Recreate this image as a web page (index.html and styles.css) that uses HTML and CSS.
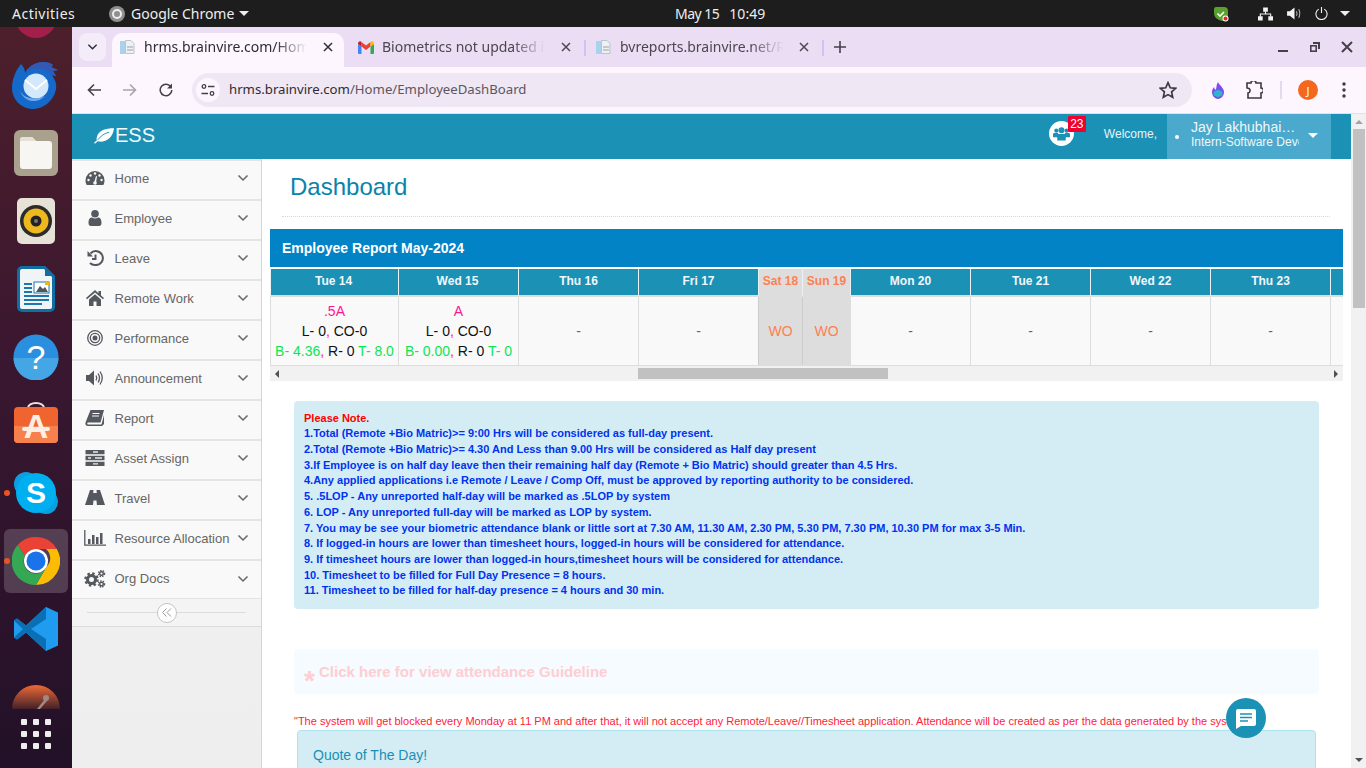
FILE: index.html
```html
<!DOCTYPE html>
<html lang="en">
<head>
    <meta charset="UTF-8">
    <meta name="viewport" content="width=device-width, initial-scale=1.0">
    <title>ESS - Dashboard</title>
    <link rel="stylesheet" href="styles.css">
</head>
<body>
    <svg class="sprite" xmlns="http://www.w3.org/2000/svg">
        <symbol id="chev" viewBox="0 0 12 8"><path d="M1.500 1.500 6 6l4.500-4.500" fill="none" stroke="currentColor" stroke-width="1.500"/></symbol>
        <symbol id="doc" viewBox="0 0 16 16">
            <path d="M1 2h5v13H1z" fill="#a9d3ea"/><path d="M6.500 1.500h5.500l3 3v10H6.500z" fill="#eef0f2" stroke="#b9c4cc"/><path d="M8 8h6M8 11h6" stroke="#b5bcc2" stroke-width="1.500"/>
        </symbol>
        <symbol id="close" viewBox="0 0 12 12"><path d="M2 2l8 8M10 2l-8 8" stroke="currentColor" stroke-width="1.500"/></symbol>
        <symbol id="gmail" viewBox="0 0 16 13">
            <path d="M0 3v9a1 1 0 0 0 1 1h2.500V5.500z" fill="#4285f4"/><path d="M16 3v9a1 1 0 0 1-1 1h-2.500V5.500z" fill="#34a853"/>
            <path d="M3.500 5.500 8 9l4.500-3.500V1L8 4.500 3.500 1z" fill="#ea4335"/><path d="M0 3c0-2.500 2-3.500 3.500-2v4.500z" fill="#c5221f"/><path d="M16 3c0-2.500-2-3.500-3.500-2v4.500z" fill="#fbbc04"/>
        </symbol>
    </svg>

    <header class="topbar">
        <div class="top-left">
            <span class="activities">Activities</span>
            <span class="app-menu">
                <svg class="app-dot" viewBox="0 0 16 16"><circle cx="8" cy="8" r="8" fill="#8f8f8f"/><circle cx="8" cy="8" r="4" fill="none" stroke="#eee" stroke-width="2"/></svg>
                Google Chrome
                <i class="caret"></i>
            </span>
        </div>
        <div class="clock"><span class="clock-date">May 15</span><span>10:49</span></div>
        <div class="tray">
            <svg class="tray-shield" viewBox="0 0 16 16">
                <path d="M1 3q0-2 2-2h8q4 0 4 4v4q0 5-6 6Q1 13 1 7z" fill="#5aa02c"/>
                <path d="M4.500 7.500 7 10l4-4" fill="none" stroke="#fff" stroke-width="1.600"/>
                <circle cx="12.500" cy="12.500" r="3" fill="#fff"/><circle cx="12.500" cy="12.500" r="2" fill="#e8232a"/>
            </svg>
            <svg class="tray-net" viewBox="0 0 16 14" fill="#f2f2f2">
                <path d="M5.500 0h5v4.500h-5zM0 9.500h5V14H0zM11 9.500h5V14h-5z"/>
                <path d="M8 4v3M2.500 10V7h11v3" fill="none" stroke="#f2f2f2" stroke-width="1.200"/>
            </svg>
            <svg class="tray-sound" viewBox="0 0 16 14">
                <path d="M0 4.500h3L8 .5v13l-5-4H0z" fill="#f2f2f2"/>
                <path d="M10 4.500q1.500 2.500 0 5M12.500 2.500q2.500 4.500 0 9" fill="none" stroke="#bbb" stroke-width="1.100"/>
            </svg>
            <svg class="tray-power" viewBox="0 0 14 14">
                <path d="M4 2.300a6 6 0 1 0 6 0M7 0v6.500" fill="none" stroke="#f2f2f2" stroke-width="1.200"/>
            </svg>
            <i class="caret"></i>
        </div>
    </header>

    <div class="desk">
        <aside class="dock">
            <div class="dock-item dock-first">
                <svg width="36" height="24" viewBox="0 0 36 24"><circle cx="18" cy="-10" r="21" fill="#a41e4c"/></svg>
            </div>
            <div class="dock-item">
                <svg width="50" height="48" viewBox="0 0 50 48">
                    <path d="M10 3c3 3 4 6 4 9 3-6 10-11 18-11 4 0 8 1 10 3l-2 2 7 3-5 1 3 5-4-1c3 5 5 9 4 14-2 11-12 20-23 20C10 48 1 38 1 27 1 18 5 9 10 3z" fill="#1569c9"/>
                    <path d="M14 12c3-6 10-11 18-11 4 0 8 1 10 3l-2 2 7 3-5 1 3 5-4-1c-5-6-17-10-27-2z" fill="#3359b5"/>
                    <circle cx="25" cy="25" r="12.500" fill="#d3e8fb"/>
                    <path d="M14 19l11 9 11-9" fill="none" stroke="#fff" stroke-width="2"/>
                    <path d="M9 30c4 7 14 10 25 5-6 7-20 8-25-5z" fill="#6aa8ee"/>
                </svg>
            </div>
            <div class="dock-item">
                <svg width="44" height="46" viewBox="0 0 44 46">
                    <rect width="44" height="46" rx="6" fill="#a9a18d"/>
                    <path d="M6 10a3 3 0 0 1 3-3h9l4 4h13a3 3 0 0 1 3 3v22a3 3 0 0 1-3 3H9a3 3 0 0 1-3-3z" fill="#f7f6f3"/>
                    <path d="M6 10a3 3 0 0 1 3-3h9l4 4H6z" fill="#e4e0d6"/>
                </svg>
            </div>
            <div class="dock-item">
                <svg width="38" height="46" viewBox="0 0 38 46">
                    <rect width="38" height="46" rx="5" fill="#e6e2d8"/>
                    <circle cx="19" cy="23" r="16" fill="#2b2b2b"/><circle cx="19" cy="23" r="12.500" fill="#eeb81f"/>
                    <circle cx="19" cy="23" r="5.500" fill="#222"/><circle cx="19" cy="23" r="2" fill="#777"/>
                </svg>
            </div>
            <div class="dock-item">
                <svg width="38" height="46" viewBox="0 0 38 46">
                    <path d="M5 0h23l10 10v31a5 5 0 0 1-5 5H5a5 5 0 0 1-5-5V5a5 5 0 0 1 5-5z" fill="#0f6ea3"/>
                    <path d="M3 5a2 2 0 0 1 2-2h22l8 8v30a2 2 0 0 1-2 2H5a2 2 0 0 1-2-2z" fill="#f1f4f6"/>
                    <path d="M28 0l10 10H28z" fill="#0f6ea3"/>
                    <path d="M7 17h8v2H7zM7 21h8v2H7zM7 25h8v2H7zM7 29h25v2H7zM7 33h25v2H7zM7 37h18v2H7z" fill="#1b78ad"/>
                    <rect x="17" y="16" width="15" height="11" fill="#fff" stroke="#1b78ad"/><path d="M19 26l4-6 3 3 2-2 3 5z" fill="#555"/><rect x="28" y="16" width="4" height="3" fill="#f0b71c"/>
                </svg>
            </div>
            <div class="dock-item">
                <svg width="46" height="46" viewBox="0 0 46 46">
                    <circle cx="23" cy="23" r="22.500" fill="#2a8fde"/><path d="M.5 24h45a22.500 22.500 0 0 1-45 0z" fill="#45a6e6"/>
                    <text x="23" y="35" class="dock-glyph dock-thin" font-size="34">?</text>
                </svg>
            </div>
            <div class="dock-item">
                <svg width="46" height="46" viewBox="0 0 46 46">
                    <path d="M15 10V6a8 5 0 0 1 16 0v4" fill="none" stroke="#f3e1d0" stroke-width="2"/>
                    <rect x="1" y="5" width="44" height="36" rx="4" fill="#f0652f"/><path d="M1 24h44v13a4 4 0 0 1-4 4H5a4 4 0 0 1-4-4z" fill="#f6814d"/>
                    <text x="23" y="36" class="dock-glyph dock-cream" font-size="34">A</text>
                    <rect x="9" y="25" width="28" height="4" rx="2" fill="#fdeee4"/>
                </svg>
            </div>
            <div class="dock-item">
                <i class="run-dot"></i>
                <svg width="46" height="44" viewBox="0 0 46 44">
                    <circle cx="13" cy="13" r="12" fill="#0a9fe0"/><circle cx="33" cy="31" r="12" fill="#0a9fe0"/>
                    <circle cx="23" cy="22" r="20" fill="#00aff0"/>
                    <text x="23" y="32" class="dock-glyph" font-size="30">S</text>
                </svg>
            </div>
            <div class="dock-item is-active">
                <i class="run-dot"></i>
                <svg width="48" height="48" viewBox="0 0 48 48">
                    <path d="M24 0a24 24 0 0 1 20.800 12H24a12 12 0 0 0-11 7L5.700 8A24 24 0 0 1 24 0z" fill="#ea4335"/>
                    <path d="M44.800 12A24 24 0 0 1 24 48l10.400-18a12 12 0 0 0-.4-18z" fill="#fbbc04"/>
                    <path d="M5.700 8A24 24 0 0 0 24 48l10.400-18A12 12 0 0 1 13 19z" fill="#34a853"/>
                    <circle cx="24" cy="24" r="12" fill="#fff"/><circle cx="24" cy="24" r="9.500" fill="#1a73e8"/>
                </svg>
            </div>
            <div class="dock-item">
                <svg width="44" height="44" viewBox="0 0 44 44">
                    <path d="M32 0l12 5.500v33L32 44 12 25.500 3 32.500 0 30.500V13.500L3 11.500l9 7z" fill="#1f9cf0"/>
                    <path d="M32 0 12 18.500 3 11.500 0 13.500 9 22 0 30.500l3 2 9-7L32 44V32L17 22 32 12z" fill="#0a6fb5"/>
                </svg>
            </div>
            <div class="dock-item dock-last">
                <svg width="48" height="24" viewBox="0 0 48 24">
                    <defs><linearGradient id="pm" x1="0" y1="0" x2="0" y2="1"><stop offset="0" stop-color="#ef6a36"/><stop offset="1" stop-color="#43202a"/></linearGradient></defs>
                    <path d="M0 24a24 24 0 0 1 48 0z" fill="url(#pm)"/>
                    <path d="M25 24l8-10 2 2-7 8z" fill="#a08a84"/><circle cx="34" cy="13" r="3" fill="#a08a84"/>
                </svg>
            </div>
            <div class="apps-grid"><i></i><i></i><i></i><i></i><i></i><i></i><i></i><i></i><i></i></div>
        </aside>

        <div class="window">
            <div class="tabstrip">
                <button class="tab-list"><svg width="11" height="8"><use href="#chev"/></svg></button>
                <div class="tab tab-active">
                    <svg class="favicon"><use href="#doc"/></svg>
                    <span class="tab-title">hrms.brainvire.com/Home/EmployeeDashBoard</span>
                    <svg class="tab-close"><use href="#close"/></svg>
                </div>
                <div class="tab tab-mail">
                    <svg class="favicon"><use href="#gmail"/></svg>
                    <span class="tab-title">Biometrics not updated issue</span>
                    <svg class="tab-close"><use href="#close"/></svg>
                </div>
                <div class="tab tab-reports">
                    <svg class="favicon"><use href="#doc"/></svg>
                    <span class="tab-title">bvreports.brainvire.net/Report</span>
                    <svg class="tab-close"><use href="#close"/></svg>
                </div>
                <svg class="tab-new" viewBox="0 0 12 12"><path d="M6 0v12M0 6h12" stroke="#45404a" stroke-width="1.600"/></svg>
                <div class="win-controls">
                    <svg viewBox="0 0 12 12"><path d="M1 10h10" stroke="#45404a" stroke-width="2"/></svg>
                    <svg viewBox="0 0 12 12"><path d="M4 1h7v7H9V3H4z" fill="#45404a"/><rect x="1.800" y="4.800" width="5.400" height="5.400" fill="none" stroke="#45404a" stroke-width="1.600"/></svg>
                    <svg viewBox="0 0 12 12"><path d="M1 1l10 10M11 1 1 11" stroke="#45404a" stroke-width="2"/></svg>
                </div>
            </div>

            <div class="toolbar">
                <span class="tool"><svg viewBox="0 0 14 14"><path d="M14 7H2M7 1.500 1.500 7 7 12.500" fill="none" stroke="#45404a" stroke-width="1.600"/></svg></span>
                <span class="tool"><svg viewBox="0 0 14 14"><path d="M0 7h12M7 1.500 12.500 7 7 12.500" fill="none" stroke="#a9a4ad" stroke-width="1.600"/></svg></span>
                <span class="tool"><svg viewBox="0 0 14 14"><path d="M12 4a5.800 5.800 0 1 0 .800 3" fill="none" stroke="#45404a" stroke-width="1.500"/><path d="M13 .5v5H8z" fill="#45404a"/></svg></span>
                <div class="omnibox">
                    <span class="site-info"><svg viewBox="0 0 14 12"><circle cx="3" cy="2.500" r="1.800" fill="none" stroke="#45404a" stroke-width="1.300"/><path d="M7 2.500h6.500M.5 9.500H7" stroke="#45404a" stroke-width="1.300"/><circle cx="11" cy="9.500" r="1.800" fill="none" stroke="#45404a" stroke-width="1.300"/></svg></span>
                    <span class="url">hrms.brainvire.com<span class="url-path">/Home/EmployeeDashBoard</span></span>
                    <svg class="star" viewBox="0 0 16 16"><path d="M8 1.500l2 4.500 4.800.5-3.600 3.200 1 4.800L8 12.100l-4.200 2.400 1-4.800L1.200 6.500 6 6z" fill="none" stroke="#3d3842" stroke-width="1.500"/></svg>
                </div>
                <span class="tool tool-first"><svg class="flame" viewBox="0 0 16 20">
                    <path d="M8 0c1 3 6 6 7 11 .5 5-3 9-7 9s-7.500-4-7-9c.3-2 1.500-4 2.500-5 0 2 1 3 2 3C6.500 6 6 3 8 0z" fill="#7a4df0"/>
                    <path d="M8 9l5 2.500v4L8 18l-5-2.500v-4z" fill="#2fb5c9"/>
                </svg></span>
                <span class="tool"><svg class="puzzle" viewBox="0 0 18 18"><path d="M2 2h4a2.500 2.500 0 0 1 5 0h5v5a2.500 2.500 0 0 1 0 5v5H3v-5a2.500 2.500 0 0 0 1-4.500L2 7z" fill="none" stroke="#3d3842" stroke-width="1.600"/></svg></span>
                <i class="tool-sep"></i>
                <span class="tool"><span class="avatar">J</span></span>
                <span class="tool"><svg class="kebab" viewBox="0 0 4 16" fill="#3d3842"><circle cx="2" cy="2" r="1.700"/><circle cx="2" cy="8" r="1.700"/><circle cx="2" cy="14" r="1.700"/></svg></span>
            </div>

            <div class="page">
                <div class="page-main">
                    <div class="app-header">
                        <div class="brand">
                            <svg class="leaf" viewBox="0 0 22 16"><path d="M21 0C12 0 5 2 3 9c-.4 1.500-.4 2.500 0 3.500L0 15l1 1 3-2.500C13 16 20 9 21 0z" fill="#fff"/><path d="M4 12C7 8 11 5 16 4" stroke="#1b91b6" stroke-width="1" fill="none"/></svg>
                            ESS
                        </div>
                        <div class="notify">
                            <svg viewBox="0 0 18 15" fill="#1b91b6">
                                <circle cx="3.500" cy="4.500" r="2.200"/><circle cx="14.500" cy="4.500" r="2.200"/><circle cx="9" cy="4" r="3.200"/>
                                <path d="M0 8.500q0-1.500 1.500-1.500h4v4.500H0zM12.500 7h4q1.500 0 1.500 1.500v3h-5.500z"/>
                                <path d="M4.500 9.500Q4.500 8 6 8h6q1.500 0 1.500 1.500V15h-9z"/>
                            </svg>
                            <span class="badge">23</span>
                        </div>
                        <span class="welcome">Welcome,</span>
                        <div class="user-box">
                            <i class="user-dot"></i>
                            <div class="user-text">
                                <div class="user-name">Jay Lakhubhai…</div>
                                <div class="user-role">Intern-Software Developer</div>
                            </div>
                            <i class="caret caret-user"></i>
                        </div>
                    </div>

                    <div class="app-body">
                        <nav class="sidebar">
                            <a class="nav-item">
                                <svg class="nav-icon" viewBox="0 0 20 16"><path d="M10 1A9.500 9.500 0 0 0 .5 10.500c0 1.800.5 3.500 1.300 4.500h16.400c.8-1 1.300-2.700 1.300-4.500A9.500 9.500 0 0 0 10 1z" fill="currentColor"/><g fill="#f9f9f9"><circle cx="3.500" cy="10" r="1.200"/><circle cx="5.500" cy="5.500" r="1.200"/><circle cx="10" cy="3.500" r="1.200"/><circle cx="14.500" cy="5.500" r="1.200"/><circle cx="16.500" cy="10" r="1.200"/><path d="M9 13l2-7 1 .3-1 7z"/><circle cx="10" cy="13" r="1.800"/></g></svg>
                                <span>Home</span>
                                <svg class="nav-chev"><use href="#chev"/></svg>
                            </a>
                            <a class="nav-item">
                                <svg class="nav-icon" viewBox="0 0 20 16"><circle cx="10" cy="3.800" r="3.800" fill="currentColor"/><path d="M3.500 13c0-4 1.500-5.500 3.500-5.500 1 .7 2 1 3 1s2-.3 3-1c2 0 3.500 1.500 3.500 5.500 0 2-1 3-2.500 3H6c-1.500 0-2.500-1-2.500-3z" fill="currentColor"/></svg>
                                <span>Employee</span>
                                <svg class="nav-chev"><use href="#chev"/></svg>
                            </a>
                            <a class="nav-item">
                                <svg class="nav-icon" viewBox="0 0 20 16"><path d="M5.500 3.500A7 7 0 1 1 10 15a7 7 0 0 1-5-2" fill="none" stroke="currentColor" stroke-width="2"/><path d="M2.500 1v5.500H8z" fill="currentColor"/><path d="M10.500 4.500V9H7" fill="none" stroke="currentColor" stroke-width="2"/></svg>
                                <span>Leave</span>
                                <svg class="nav-chev"><use href="#chev"/></svg>
                            </a>
                            <a class="nav-item">
                                <svg class="nav-icon" viewBox="0 0 20 16"><path d="M10 0 1 8l1 1.200L10 2.500l8 6.700L19 8l-3-2.600V1h-2.500v2.300z" fill="currentColor"/><path d="M4 9.500 10 4.300l6 5.200V16h-4.500v-4.500h-3V16H4z" fill="currentColor"/></svg>
                                <span>Remote Work</span>
                                <svg class="nav-chev"><use href="#chev"/></svg>
                            </a>
                            <a class="nav-item">
                                <svg class="nav-icon" viewBox="0 0 20 16"><g fill="none" stroke="currentColor"><circle cx="10" cy="8" r="7.300" stroke-width="1.300"/><circle cx="10" cy="8" r="4.700" stroke-width="1.300"/></g><circle cx="10" cy="8" r="2.500" fill="currentColor"/></svg>
                                <span>Performance</span>
                                <svg class="nav-chev"><use href="#chev"/></svg>
                            </a>
                            <a class="nav-item">
                                <svg class="nav-icon" viewBox="0 0 20 16"><path d="M1 5h3l5-4.500v15L4 11H1z" fill="currentColor"/><g fill="none" stroke="currentColor" stroke-width="1.300"><path d="M11 5.500q1.500 2.500 0 5"/><path d="M13 3.500q3 4.500 0 9"/><path d="M15 1.500q4.500 6.500 0 13"/></g></svg>
                                <span>Announcement</span>
                                <svg class="nav-chev"><use href="#chev"/></svg>
                            </a>
                            <a class="nav-item">
                                <svg class="nav-icon" viewBox="0 0 20 16"><path d="M5.500 0H19l-3.500 12.500H3c-1 0-1 2 0 2h13.500L19 5v9l-2 2H3c-2 0-3-1.500-2.500-3.500z" fill="currentColor"/><path d="M7.500 3.500h7M7 6h7" stroke="#f9f9f9" stroke-width="1"/></svg>
                                <span>Report</span>
                                <svg class="nav-chev"><use href="#chev"/></svg>
                            </a>
                            <a class="nav-item">
                                <svg class="nav-icon" viewBox="0 0 20 16"><path d="M.5 0h19v4.300H.5zM.5 5.800h19v4.400H.5zM.5 11.700h19V16H.5z" fill="currentColor"/><path d="M8 2h5M3 8h3M10 8h7M8 13.800h5" stroke="#e8e8e8" stroke-width="1.300"/></svg>
                                <span>Asset Assign</span>
                                <svg class="nav-chev"><use href="#chev"/></svg>
                            </a>
                            <a class="nav-item">
                                <svg class="nav-icon" viewBox="0 0 20 16"><path d="M5 0h3.500L8.200 3h3.600L11.500 0H15l5 15H11.900l-.4-4.500h-3L8 15H0z" fill="currentColor"/><path d="M8.700 5.500h2.600l.2 3.500h-3z" fill="currentColor"/></svg>
                                <span>Travel</span>
                                <svg class="nav-chev"><use href="#chev"/></svg>
                            </a>
                            <a class="nav-item">
                                <svg class="nav-icon nav-icon-wide" viewBox="0 0 22 16"><path d="M.8 0v15.200H22" fill="none" stroke="currentColor" stroke-width="1.300"/><path d="M4 9h2.500v5H4zM8 5h2.500v9H8zM12 7h2.500v7H12zM16 3h2.500v11H16z" fill="currentColor"/></svg>
                                <span>Resource Allocation</span>
                                <svg class="nav-chev"><use href="#chev"/></svg>
                            </a>
                            <a class="nav-item">
                                <svg class="nav-icon nav-icon-wide" viewBox="0 0 22 18"><g fill="none" stroke="currentColor"><circle cx="7.500" cy="9.500" r="4" stroke-width="3"/><circle cx="7.500" cy="9.500" r="6" stroke-width="2.500" stroke-dasharray="2.400 2.300"/><circle cx="17.500" cy="3.500" r="1.800" stroke-width="1.400"/><circle cx="17.500" cy="3.500" r="3" stroke-width="1.500" stroke-dasharray="1.400 1.100"/><circle cx="17.500" cy="14" r="1.800" stroke-width="1.400"/><circle cx="17.500" cy="14" r="3" stroke-width="1.500" stroke-dasharray="1.400 1.100"/></g></svg>
                                <span>Org Docs</span>
                                <svg class="nav-chev"><use href="#chev"/></svg>
                            </a>
                            <div class="collapse-row">
                                <span class="collapse-btn"><svg width="10" height="9" viewBox="0 0 10 9"><path d="M4.500.5.500 4.500l4 4M9 .5l-4 4 4 4" fill="none" stroke="#999" stroke-width="1"/></svg></span>
                            </div>
                        </nav>

                        <main class="content">
                            <div class="page-title"><h1>Dashboard</h1></div>

                            <div class="panel-head">Employee Report May-2024</div>
                            <div class="table-wrap">
                                <table class="report">
                                    <thead>
                                        <tr>
                                            <th class="d-first">Tue 14</th><th class="d-second">Wed 15</th><th>Thu 16</th><th>Fri 17</th>
                                            <th class="off d-sat">Sat 18</th><th class="off d-sun">Sun 19</th>
                                            <th>Mon 20</th><th>Tue 21</th><th>Wed 22</th><th>Thu 23</th><th>Fri 24</th>
                                        </tr>
                                    </thead>
                                    <tbody>
                                        <tr>
                                            <td><div class="st">.5A</div><div>L- 0<span class="st">,</span> CO-0</div><div><span class="ok">B- 4.36</span><span class="st">,</span> R- 0 <span class="ok">T- 8.0</span></div></td>
                                            <td><div class="st">A</div><div>L- 0<span class="st">,</span> CO-0</div><div><span class="ok">B- 0.00</span><span class="st">,</span> R- 0 <span class="ok">T- 0</span></div></td>
                                            <td class="na">-</td><td class="na">-</td>
                                            <td class="off">WO</td><td class="off">WO</td>
                                            <td class="na">-</td><td class="na">-</td><td class="na">-</td><td class="na">-</td><td class="na">-</td>
                                        </tr>
                                    </tbody>
                                </table>
                            </div>
                            <div class="hscroll">
                                <i class="arrow arrow-left"></i>
                                <div class="hscroll-track"><div class="hscroll-thumb"></div></div>
                                <i class="arrow arrow-right"></i>
                            </div>

                            <div class="notice">
                                <div class="notice-red">Please Note.</div>
                                <div>1.Total (Remote +Bio Matric)&gt;= 9:00 Hrs will be considered as full-day present.</div>
                                <div>2.Total (Remote +Bio Matric)&gt;= 4.30 And Less than 9.00 Hrs will be considered as Half day present</div>
                                <div>3.If Employee is on half day leave then their remaining half day (Remote + Bio Matric) should greater than 4.5 Hrs.</div>
                                <div>4.Any applied applications i.e Remote / Leave / Comp Off, must be approved by reporting authority to be considered.</div>
                                <div>5. .5LOP - Any unreported half-day will be marked as .5LOP by system</div>
                                <div>6. LOP - Any unreported full-day will be marked as LOP by system.</div>
                                <div>7. You may be see your biometric attendance blank or little sort at 7.30 AM, 11.30 AM, 2.30 PM, 5.30 PM, 7.30 PM, 10.30 PM for max 3-5 Min.</div>
                                <div>8. If logged-in hours are lower than timesheet hours, logged-in hours will be considered for attendance.</div>
                                <div>9. If timesheet hours are lower than logged-in hours,timesheet hours will be considered for attendance.</div>
                                <div>10. Timesheet to be filled for Full Day Presence = 8 hours.</div>
                                <div>11. Timesheet to be filled for half-day presence = 4 hours and 30 min.</div>
                            </div>

                            <div class="guideline"><span class="guide-star">*</span>Click here for view attendance Guideline</div>

                            <p class="block-note">"The system will get blocked every Monday at 11 PM and after that, it will not accept any Remote/Leave//Timesheet application. Attendance will be created as per the data generated by the system."</p>

                            <div class="quote"><div class="quote-title">Quote of The Day!</div></div>
                        </main>
                    </div>
                </div>

                <div class="vscroll">
                    <i class="arrow arrow-up"></i>
                    <div class="vscroll-thumb"></div>
                    <i class="arrow arrow-down"></i>
                </div>
            </div>
        </div>
    </div>

    <button class="chat-btn">
        <svg viewBox="0 0 20 20" width="20" height="20"><path d="M2 0h16a2 2 0 0 1 2 2v13a2 2 0 0 1-2 2H5l-5 3V2a2 2 0 0 1 2-2z" fill="#fff"/><path d="M4 5h12M4 8.500h12M4 12h8" stroke="#1b91b6" stroke-width="1.600"/></svg>
    </button>
</body>
</html>
```

FILE: styles.css
```css
* {
    box-sizing: border-box;
}
html, body {
    height: 100%;
}
body {
    margin: 0;
    width: 1366px;
    height: 768px;
    overflow: hidden;
    display: flex;
    flex-direction: column;
    font-family: "Liberation Sans", Arial, sans-serif;
    background: #fff;
}
.sprite {
    display: none;
}

/* ubuntu top bar */
.topbar {
    height: 27px;
    flex: none;
    display: flex;
    align-items: center;
    background: #1d1d1d;
    color: #eee;
    font-family: "Noto Sans", sans-serif;
    font-size: 14px;
}
.top-left {
    width: 663px;
    margin-right: 12px;
    display: flex;
    align-items: center;
    padding-left: 12px;
}
.activities {
    width: 97px;
    letter-spacing: 0.5px;
}
.app-menu {
    display: flex;
    align-items: center;
}
.app-dot {
    width: 16px;
    height: 16px;
    margin-right: 6px;
}
.caret {
    display: inline-block;
    width: 0;
    height: 0;
    border-left: 5px solid transparent;
    border-right: 5px solid transparent;
    border-top: 5px solid #eee;
}
.app-menu .caret {
    margin-left: 5px;
}
.clock {
    display: flex;
    gap: 10px;
}
.clock-date {
    letter-spacing: -0.5px;
}
.tray {
    margin-left: auto;
    display: flex;
    align-items: center;
    padding-right: 16px;
}
.tray-shield {
    width: 16px;
    height: 16px;
    margin-right: 29px;
}
.tray-net {
    width: 15px;
    height: 14px;
    margin-right: 14px;
}
.tray-sound {
    width: 15px;
    height: 13px;
    margin-right: 13px;
}
.tray-power {
    width: 13px;
    height: 13px;
    margin-right: 12px;
}

/* dock */
.desk {
    flex: 1;
    display: flex;
    min-height: 0;
}
.dock {
    width: 72px;
    flex: none;
    position: relative;
    display: flex;
    flex-direction: column;
    align-items: center;
    background: linear-gradient(180deg, #4d1f2b 0%, #3a1730 45%, #221128 100%);
}
.dock-item {
    width: 64px;
    height: 68px;
    flex: none;
    display: flex;
    align-items: center;
    justify-content: center;
    position: relative;
    border-radius: 6px;
}
.dock-first {
    height: 24px;
    align-items: flex-start;
}
.dock-last {
    height: 24px;
    margin-top: 22px;
    align-items: flex-end;
}
.is-active {
    height: 64px;
    margin: 2px 0;
    background: rgba(255, 255, 255, 0.18);
}
.run-dot {
    position: absolute;
    left: 0;
    top: 31px;
    width: 6px;
    height: 6px;
    border-radius: 50%;
    background: #e95420;
}
.is-active .run-dot {
    top: 29px;
}
.dock-glyph {
    fill: #fff;
    font-family: "Liberation Sans", sans-serif;
    font-weight: bold;
    text-anchor: middle;
}
.dock-thin {
    font-weight: normal;
}
.dock-cream {
    fill: #fdeee4;
}
.apps-grid {
    position: absolute;
    left: 21px;
    bottom: 19px;
    display: grid;
    grid-template-columns: repeat(3, 6px);
    gap: 6px;
}
.apps-grid i {
    width: 6px;
    height: 6px;
    border-radius: 1px;
    background: #eee;
}

/* chrome window */
.window {
    flex: 1;
    min-width: 0;
    display: flex;
    flex-direction: column;
    font-family: "Noto Sans", sans-serif;
}
.tabstrip {
    height: 40px;
    flex: none;
    display: flex;
    align-items: flex-end;
    padding-left: 7px;
    background: #ebddf4;
}
.tab-list {
    width: 27px;
    height: 28px;
    margin: 0 6px 6px 0;
    border: none;
    border-radius: 8px;
    background: #f4ecf9;
    color: #2f2b33;
    display: flex;
    align-items: center;
    justify-content: center;
    padding: 0;
}
.tab {
    height: 34px;
    display: flex;
    align-items: center;
    padding: 0 11px 6px 14px;
    font-size: 14px;
    color: #4b4650;
    position: relative;
}
.tab-active {
    width: 232px;
    height: 34px;
    padding: 0 8px 6px 7px;
    background: #fdf6fe;
    border-radius: 10px 10px 0 0;
    color: #2f2b33;
}
.tab-mail {
    width: 241px;
}
.tab-mail::after, .tab-reports::after {
    content: "";
    position: absolute;
    right: -1px;
    top: 7px;
    width: 2px;
    height: 16px;
    background: #d5c0ee;
}
.tab-reports {
    width: 238px;
    padding-left: 10px;
}
.favicon {
    width: 16px;
    height: 16px;
    flex: none;
    margin-right: 9px;
}
.tab-mail .favicon {
    height: 13px;
    margin-right: 8px;
}
.tab-title {
    flex: 1;
    min-width: 0;
    margin-right: 8px;
    padding-bottom: 2px;
    white-space: nowrap;
    overflow: hidden;
    -webkit-mask-image: linear-gradient(90deg, #000 78%, transparent 97%);
    mask-image: linear-gradient(90deg, #000 78%, transparent 97%);
}
.tab-close {
    width: 12px;
    height: 12px;
    margin: 0 2px;
    flex: none;
}
.tab-new {
    width: 12px;
    height: 12px;
    margin: 0 0 14px 11px;
}
.win-controls {
    margin-left: auto;
    display: flex;
    padding: 0 3px 14px 0;
}
.win-controls svg {
    width: 32px;
    height: 12px;
}

.toolbar {
    height: 47px;
    flex: none;
    display: flex;
    align-items: center;
    padding-left: 4px;
    background: #fdf6fe;
    border-bottom: 1px solid #dfe3e6;
}
.tool {
    width: 36px;
    height: 36px;
    flex: none;
    display: flex;
    align-items: center;
    justify-content: center;
}
.tool > svg {
    width: 14px;
    height: 14px;
}
.tool > .flame {
    width: 14px;
    height: 17px;
}
.tool > .puzzle {
    width: 18px;
    height: 18px;
}
.tool > .kebab {
    width: 4px;
    height: 16px;
}
.tool-first {
    margin-left: 8px;
}
.tool-sep {
    width: 2px;
    height: 18px;
    margin: 0 8px 0 8px;
    background: #e5d8f0;
}
.avatar {
    width: 20px;
    height: 20px;
    border-radius: 50%;
    background: #f4671f;
    color: #fff;
    font-size: 11px;
    display: flex;
    align-items: center;
    justify-content: center;
}
.omnibox {
    width: 1000px;
    height: 34px;
    margin-left: 8px;
    border-radius: 17px;
    background: #efe7f3;
    display: flex;
    align-items: center;
    padding-left: 4px;
    font-size: 13.200px;
    color: #2f2b33;
}
.site-info {
    width: 24px;
    height: 24px;
    border-radius: 50%;
    background: #fdf6fe;
    display: flex;
    align-items: center;
    justify-content: center;
    margin-right: 9px;
}
.site-info svg {
    width: 14px;
    height: 12px;
}
.url {
    flex: 1;
    padding-bottom: 2px;
}
.url-path {
    color: #5b5661;
}
.star {
    width: 18px;
    height: 18px;
    margin-right: 15px;
}

/* page */
.page {
    flex: 1;
    min-height: 0;
    display: flex;
    font-family: "Liberation Sans", Arial, sans-serif;
}
.page-main {
    flex: 1;
    min-width: 0;
    display: flex;
    flex-direction: column;
}
.app-header {
    height: 45px;
    flex: none;
    display: flex;
    align-items: center;
    padding-right: 20px;
    background: #1b91b6;
    color: #fff;
}
.brand {
    display: flex;
    align-items: center;
    padding-left: 22px;
    padding-bottom: 2px;
    font-size: 20px;
    margin-right: auto;
    color: #f4fbfd;
}
.leaf {
    width: 21px;
    height: 16px;
}
.notify {
    width: 25px;
    height: 25px;
    border-radius: 50%;
    background: #fff;
    display: flex;
    align-items: center;
    justify-content: center;
    position: relative;
    margin: 0 30px 7px 0;
}
.notify svg {
    width: 17px;
    height: 15px;
}
.badge {
    position: absolute;
    left: 19px;
    top: -5px;
    width: 18px;
    height: 16px;
    background: #f0002e;
    font-size: 12px;
    line-height: 16px;
    text-align: center;
    color: #fff;
    border-radius: 1px;
}
.welcome {
    font-size: 12px;
    color: #e6f3f7;
    margin: 0 10px 6px 0;
}
.user-box {
    width: 164px;
    height: 45px;
    background: #4aa9cc;
    display: flex;
    align-items: center;
    padding-left: 8px;
}
.user-dot {
    width: 4px;
    height: 4px;
    border-radius: 50%;
    background: #fff;
    margin-right: 12px;
}
.user-text {
    width: 108px;
    overflow: hidden;
    white-space: nowrap;
    color: #eef7fa;
    padding-bottom: 4px;
}
.user-name {
    font-size: 14px;
    line-height: 15px;
}
.user-role {
    font-size: 12px;
    line-height: 14px;
}
.caret-user {
    margin: 0 0 2px 9px;
    border-top-color: #fff;
}

.app-body {
    flex: 1;
    min-height: 0;
    display: flex;
}

/* sidebar */
.sidebar {
    width: 190px;
    flex: none;
    padding-top: 2px;
    background: linear-gradient(180deg, #e4e4e4 0, #e4e4e4 2px, #f4f4f4 2px, #eeeeee 100%);
    border-right: 1px solid #d5d5d5;
}
.nav-item {
    height: 40px;
    display: flex;
    align-items: center;
    padding: 0 12px 4px 13px;
    background: #f9f9f9;
    border-bottom: 2px solid #e4e4e4;
    font-size: 13px;
    color: #666;
}
.nav-item:nth-child(11) {
    border-bottom-width: 1px;
    height: 38px;
    padding-bottom: 2px;
}
.nav-icon {
    width: 20px;
    height: 16px;
    flex: none;
    margin-right: 9.500px;
    color: #55585e;
}
.nav-icon-wide {
    width: 22px;
    height: 18px;
    margin-left: -1px;
    margin-right: 8.500px;
}
.nav-chev {
    width: 12px;
    height: 8px;
    margin-left: auto;
    color: #666;
}
.collapse-row {
    height: 28px;
    position: relative;
    display: flex;
    align-items: center;
    justify-content: center;
    border-bottom: 1px solid #dcdcdc;
    background: #f4f4f4;
}
.collapse-row::before {
    content: "";
    position: absolute;
    left: 15px;
    right: 15px;
    top: 13px;
    height: 1px;
    background: #dcdcdc;
}
.collapse-btn {
    width: 20px;
    height: 20px;
    border-radius: 50%;
    border: 1px solid #c4c4c4;
    background: #fff;
    position: relative;
    display: flex;
    align-items: center;
    justify-content: center;
}

/* content */
.content {
    flex: 1;
    min-width: 0;
    overflow: hidden;
    padding: 0 8px;
    background: #fff;
}
.page-title {
    height: 58px;
    margin: 0 13px 12px 12px;
    border-bottom: 1px dotted #d8d8d8;
    padding: 14px 0 0 8px;
}
.page-title h1 {
    margin: 0;
    font-size: 24px;
    line-height: 27px;
    font-weight: normal;
    color: #0a83ab;
}
.panel-head {
    height: 38px;
    padding-left: 12px;
    background: #0283c6;
    color: #fff;
    font-size: 14px;
    font-weight: bold;
    line-height: 38px;
}
.table-wrap {
    overflow: hidden;
    margin-top: 1px;
    border-bottom: 1px solid #ddd;
}
.report {
    width: 1100px;
    table-layout: fixed;
    border-collapse: separate;
    border-spacing: 0;
    font-size: 14px;
    color: #111;
}
.report th {
    width: 120px;
    height: 29px;
    padding: 0 0 2px;
    background: #1b91b6;
    color: #f0f8fb;
    font-size: 12px;
    border-top: 1px solid #fff;
    border-left: 1px solid #eaf2f5;
    border-bottom: 2px solid #ddd;
}
.report th.d-first {
    width: 128px;
    padding-right: 2px;
}
.report th.d-second {
    padding-right: 2px;
}
.report th.d-sat {
    width: 44px;
}
.report th.d-sun {
    width: 48px;
}
.report th.off {
    background: #ddd;
    color: #ff7f50;
}
.report td {
    height: 68px;
    padding: 4px 0;
    line-height: 20px;
    text-align: center;
    white-space: nowrap;
    background: #f9f9f9;
    border-left: 1px solid #ddd;
}
.report td.off {
    background: #ddd;
    color: #ff7f50;
    border-left-color: #ccc;
}
.report td.na {
    color: #666;
}
.st {
    color: #ff1493;
}
.ok {
    color: #0ce651;
}
.hscroll {
    height: 15px;
    display: flex;
    align-items: center;
    background: #f1f1f1;
}
.hscroll-track {
    flex: 1;
}
.hscroll-thumb {
    width: 250px;
    height: 11px;
    margin-left: 349px;
    background: #c1c1c1;
}
.arrow {
    width: 0;
    height: 0;
    flex: none;
    border: 4px solid transparent;
}
.arrow-left {
    border-left-width: 0;
    border-right-color: #505050;
    margin: 0 10px 0 5px;
}
.arrow-right {
    border-right-width: 0;
    border-left-color: #505050;
    margin: 0 5px 0 10px;
}
.notice {
    margin: 20px 24px 0;
    padding: 9.600px 10px 10.400px;
    background: #d4edf4;
    border-radius: 4px;
    color: #0033f0;
    font-size: 11px;
    font-weight: bold;
    line-height: 15.700px;
}
.notice-red {
    color: #ff0000;
}
.guideline {
    height: 45px;
    margin: 40px 24px 0;
    padding: 14px 0 0 25px;
    position: relative;
    background: #f5fbfe;
    border-radius: 4px;
    color: #ffcdd2;
    font-size: 15px;
    font-weight: bold;
    line-height: 18px;
}
.guide-star {
    position: absolute;
    left: 10px;
    top: 18px;
    font-size: 28px;
    line-height: 28px;
}
.block-note {
    margin: 20px 0 0 24px;
    font-size: 11px;
    line-height: 14px;
    color: #ff1a3a;
    white-space: nowrap;
}
.quote {
    height: 120px;
    margin: 2px 27px 0;
    padding: 15px;
    background: #d4edf4;
    border: 1px solid #aee3ee;
    border-radius: 4px;
}
.quote-title {
    font-size: 14px;
    line-height: 18px;
    color: #1a8fb5;
}

/* page scrollbar */
.vscroll {
    width: 15px;
    flex: none;
    display: flex;
    flex-direction: column;
    align-items: center;
    background: #f1f1f1;
}
.arrow-up {
    border-top-width: 0;
    border-bottom-color: #a3a3a3;
    margin-top: 6px;
}
.vscroll-thumb {
    width: 12px;
    height: 179px;
    margin-top: 5px;
    background: #c1c1c1;
}
.arrow-down {
    border-bottom-width: 0;
    border-top-color: #505050;
    margin-top: auto;
    margin-bottom: 6px;
}

/* chat bubble */
.chat-btn {
    position: absolute;
    left: 1226px;
    top: 698px;
    width: 40px;
    height: 40px;
    border: none;
    border-radius: 50%;
    padding: 2px 0 0;
    background: #1b91b6;
    display: flex;
    align-items: center;
    justify-content: center;
}
```
